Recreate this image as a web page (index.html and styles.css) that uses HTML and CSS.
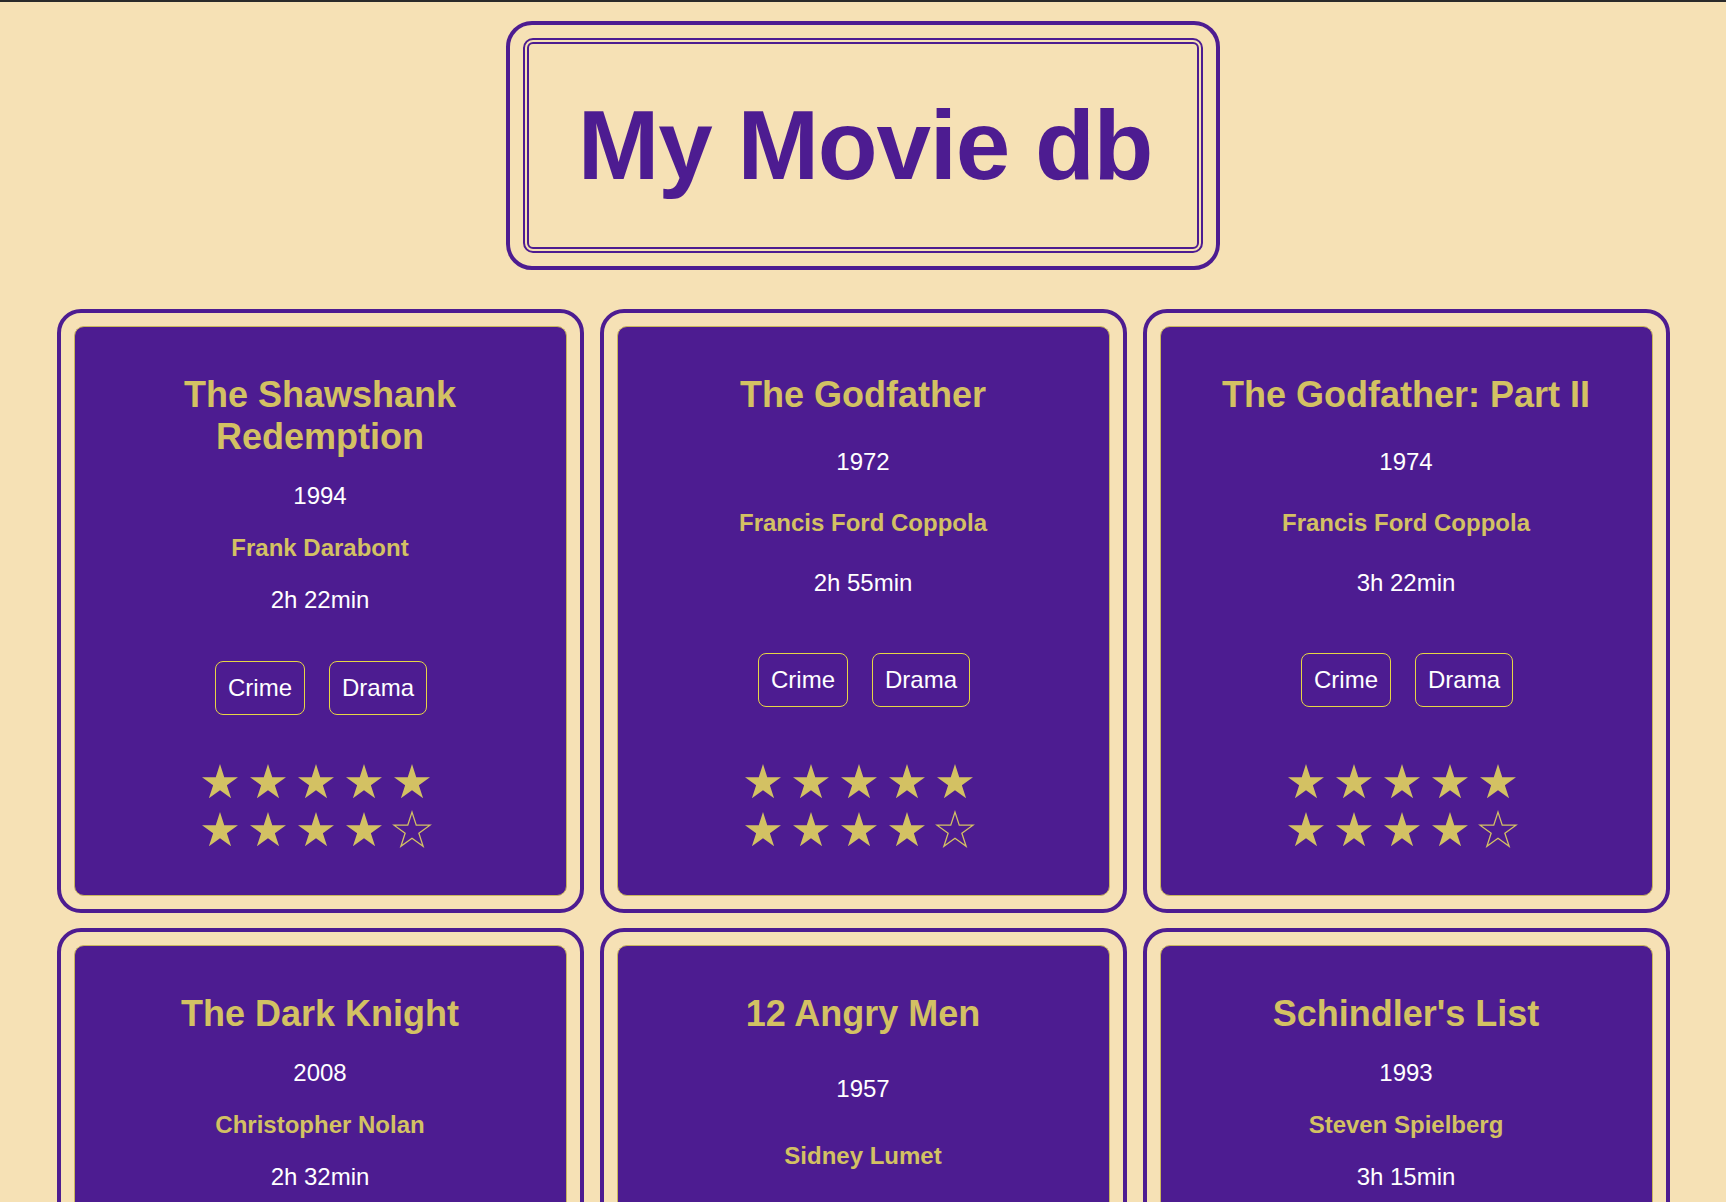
FILE: index.html
```html
<!DOCTYPE html>
<html lang="en">
<head>
<meta charset="utf-8">
<title>My Movie db</title>
<link rel="stylesheet" href="styles.css">
</head>
<body>
<svg class="svg-defs" width="0" height="0" aria-hidden="true">
  <defs>
    <path id="star" d="M18 0 L22.27 13.13 L36.07 13.13 L24.9 21.24 L29.17 34.37 L18 26.26 L6.83 34.37 L11.1 21.24 L-0.07 13.13 L13.73 13.13 Z"/>
  </defs>
</svg>

<header class="masthead">
  <div class="masthead-inner">
    <h1 class="site-title">My Movie db</h1>
  </div>
</header>

<main class="movie-grid">
  <article class="movie-card">
    <div class="movie-body">
      <h2 class="movie-title">The Shawshank Redemption</h2>
      <p class="movie-year">1994</p>
      <p class="movie-director">Frank Darabont</p>
      <p class="movie-runtime">2h 22min</p>
      <ul class="genre-list"><li class="genre">Crime</li><li class="genre">Drama</li></ul>
      <div class="rating">
        <svg class="star full" viewBox="-0.1 0 36.2 35"><use href="#star"/></svg>
        <svg class="star full" viewBox="-0.1 0 36.2 35"><use href="#star"/></svg>
        <svg class="star full" viewBox="-0.1 0 36.2 35"><use href="#star"/></svg>
        <svg class="star full" viewBox="-0.1 0 36.2 35"><use href="#star"/></svg>
        <svg class="star full" viewBox="-0.1 0 36.2 35"><use href="#star"/></svg>
        <svg class="star full" viewBox="-0.1 0 36.2 35"><use href="#star"/></svg>
        <svg class="star full" viewBox="-0.1 0 36.2 35"><use href="#star"/></svg>
        <svg class="star full" viewBox="-0.1 0 36.2 35"><use href="#star"/></svg>
        <svg class="star full" viewBox="-0.1 0 36.2 35"><use href="#star"/></svg>
        <svg class="star empty" viewBox="-0.1 0 36.2 35"><use href="#star"/></svg>
      </div>
    </div>
  </article>

  <article class="movie-card">
    <div class="movie-body">
      <h2 class="movie-title">The Godfather</h2>
      <p class="movie-year">1972</p>
      <p class="movie-director">Francis Ford Coppola</p>
      <p class="movie-runtime">2h 55min</p>
      <ul class="genre-list"><li class="genre">Crime</li><li class="genre">Drama</li></ul>
      <div class="rating">
        <svg class="star full" viewBox="-0.1 0 36.2 35"><use href="#star"/></svg>
        <svg class="star full" viewBox="-0.1 0 36.2 35"><use href="#star"/></svg>
        <svg class="star full" viewBox="-0.1 0 36.2 35"><use href="#star"/></svg>
        <svg class="star full" viewBox="-0.1 0 36.2 35"><use href="#star"/></svg>
        <svg class="star full" viewBox="-0.1 0 36.2 35"><use href="#star"/></svg>
        <svg class="star full" viewBox="-0.1 0 36.2 35"><use href="#star"/></svg>
        <svg class="star full" viewBox="-0.1 0 36.2 35"><use href="#star"/></svg>
        <svg class="star full" viewBox="-0.1 0 36.2 35"><use href="#star"/></svg>
        <svg class="star full" viewBox="-0.1 0 36.2 35"><use href="#star"/></svg>
        <svg class="star empty" viewBox="-0.1 0 36.2 35"><use href="#star"/></svg>
      </div>
    </div>
  </article>

  <article class="movie-card">
    <div class="movie-body">
      <h2 class="movie-title">The Godfather: Part II</h2>
      <p class="movie-year">1974</p>
      <p class="movie-director">Francis Ford Coppola</p>
      <p class="movie-runtime">3h 22min</p>
      <ul class="genre-list"><li class="genre">Crime</li><li class="genre">Drama</li></ul>
      <div class="rating">
        <svg class="star full" viewBox="-0.1 0 36.2 35"><use href="#star"/></svg>
        <svg class="star full" viewBox="-0.1 0 36.2 35"><use href="#star"/></svg>
        <svg class="star full" viewBox="-0.1 0 36.2 35"><use href="#star"/></svg>
        <svg class="star full" viewBox="-0.1 0 36.2 35"><use href="#star"/></svg>
        <svg class="star full" viewBox="-0.1 0 36.2 35"><use href="#star"/></svg>
        <svg class="star full" viewBox="-0.1 0 36.2 35"><use href="#star"/></svg>
        <svg class="star full" viewBox="-0.1 0 36.2 35"><use href="#star"/></svg>
        <svg class="star full" viewBox="-0.1 0 36.2 35"><use href="#star"/></svg>
        <svg class="star full" viewBox="-0.1 0 36.2 35"><use href="#star"/></svg>
        <svg class="star empty" viewBox="-0.1 0 36.2 35"><use href="#star"/></svg>
      </div>
    </div>
  </article>

  <article class="movie-card">
    <div class="movie-body">
      <h2 class="movie-title">The Dark Knight</h2>
      <p class="movie-year">2008</p>
      <p class="movie-director">Christopher Nolan</p>
      <p class="movie-runtime">2h 32min</p>
      <ul class="genre-list"><li class="genre">Action</li><li class="genre">Crime</li><li class="genre">Drama</li></ul>
      <div class="rating">
        <svg class="star full" viewBox="-0.1 0 36.2 35"><use href="#star"/></svg>
        <svg class="star full" viewBox="-0.1 0 36.2 35"><use href="#star"/></svg>
        <svg class="star full" viewBox="-0.1 0 36.2 35"><use href="#star"/></svg>
        <svg class="star full" viewBox="-0.1 0 36.2 35"><use href="#star"/></svg>
        <svg class="star full" viewBox="-0.1 0 36.2 35"><use href="#star"/></svg>
        <svg class="star full" viewBox="-0.1 0 36.2 35"><use href="#star"/></svg>
        <svg class="star full" viewBox="-0.1 0 36.2 35"><use href="#star"/></svg>
        <svg class="star full" viewBox="-0.1 0 36.2 35"><use href="#star"/></svg>
        <svg class="star full" viewBox="-0.1 0 36.2 35"><use href="#star"/></svg>
        <svg class="star empty" viewBox="-0.1 0 36.2 35"><use href="#star"/></svg>
      </div>
    </div>
  </article>

  <article class="movie-card">
    <div class="movie-body">
      <h2 class="movie-title">12 Angry Men</h2>
      <p class="movie-year">1957</p>
      <p class="movie-director">Sidney Lumet</p>
      <p class="movie-runtime">1h 36min</p>
      <ul class="genre-list"><li class="genre">Crime</li><li class="genre">Drama</li></ul>
      <div class="rating">
        <svg class="star full" viewBox="-0.1 0 36.2 35"><use href="#star"/></svg>
        <svg class="star full" viewBox="-0.1 0 36.2 35"><use href="#star"/></svg>
        <svg class="star full" viewBox="-0.1 0 36.2 35"><use href="#star"/></svg>
        <svg class="star full" viewBox="-0.1 0 36.2 35"><use href="#star"/></svg>
        <svg class="star full" viewBox="-0.1 0 36.2 35"><use href="#star"/></svg>
        <svg class="star full" viewBox="-0.1 0 36.2 35"><use href="#star"/></svg>
        <svg class="star full" viewBox="-0.1 0 36.2 35"><use href="#star"/></svg>
        <svg class="star full" viewBox="-0.1 0 36.2 35"><use href="#star"/></svg>
        <svg class="star full" viewBox="-0.1 0 36.2 35"><use href="#star"/></svg>
        <svg class="star empty" viewBox="-0.1 0 36.2 35"><use href="#star"/></svg>
      </div>
    </div>
  </article>

  <article class="movie-card">
    <div class="movie-body">
      <h2 class="movie-title">Schindler's List</h2>
      <p class="movie-year">1993</p>
      <p class="movie-director">Steven Spielberg</p>
      <p class="movie-runtime">3h 15min</p>
      <ul class="genre-list"><li class="genre">Biography</li><li class="genre">Drama</li><li class="genre">History</li></ul>
      <div class="rating">
        <svg class="star full" viewBox="-0.1 0 36.2 35"><use href="#star"/></svg>
        <svg class="star full" viewBox="-0.1 0 36.2 35"><use href="#star"/></svg>
        <svg class="star full" viewBox="-0.1 0 36.2 35"><use href="#star"/></svg>
        <svg class="star full" viewBox="-0.1 0 36.2 35"><use href="#star"/></svg>
        <svg class="star full" viewBox="-0.1 0 36.2 35"><use href="#star"/></svg>
        <svg class="star full" viewBox="-0.1 0 36.2 35"><use href="#star"/></svg>
        <svg class="star full" viewBox="-0.1 0 36.2 35"><use href="#star"/></svg>
        <svg class="star full" viewBox="-0.1 0 36.2 35"><use href="#star"/></svg>
        <svg class="star full" viewBox="-0.1 0 36.2 35"><use href="#star"/></svg>
        <svg class="star empty" viewBox="-0.1 0 36.2 35"><use href="#star"/></svg>
      </div>
    </div>
  </article>
</main>
</body>
</html>
```

FILE: styles.css
```css
* {
  box-sizing: border-box;
}

html {
  background: #f6e1b5;
}

body {
  margin: 0;
  border-top: 2px solid #2a2a2a;
  background: #f6e1b5;
  font-family: "Liberation Sans", Arial, Helvetica, sans-serif;
  color: #4d1c91;
}

.svg-defs {
  position: absolute;
  width: 0;
  height: 0;
  overflow: hidden;
}

/* ---------- header ---------- */
.masthead {
  width: 714px;
  margin: 19px auto 39px;
  border: 4px solid #4d1c91;
  border-radius: 26px;
  padding: 13px;
}

.masthead-inner {
  border: 6px double #4d1c91;
  border-radius: 10px;
}

.site-title {
  margin: 0;
  padding: 45px 0 45px 4px;
  text-align: center;
  font-size: 98px;
  font-weight: 700;
  letter-spacing: -1.25px;
  line-height: normal;
  color: #4d1c91;
}

/* ---------- grid ---------- */
.movie-grid {
  display: grid;
  grid-template-columns: repeat(3, 527px);
  justify-content: center;
  column-gap: 16px;
  row-gap: 15px;
  padding-bottom: 40px;
}

.movie-card {
  display: flex;
  flex-direction: column;
  border: 4px solid #4d1c91;
  border-radius: 24px;
  padding: 13px;
  background: #f6e1b5;
}

.movie-body {
  flex: 1;
  display: flex;
  flex-direction: column;
  align-items: center;
  justify-content: space-between;
  text-align: center;
  background: #4d1c91;
  border: 1px solid #c9b55e;
  border-radius: 10px;
  padding: 47px 40px 41px;
}

.movie-title {
  margin: 0;
  font-size: 36px;
  font-weight: 700;
  line-height: normal;
  color: #d3c163;
}

.movie-year,
.movie-director,
.movie-runtime {
  margin: 24px 0 0;
  font-size: 24px;
  line-height: normal;
}

.movie-year,
.movie-runtime {
  color: #ffffff;
}

.movie-director {
  font-weight: 700;
  color: #d3c163;
}

.genre-list {
  display: flex;
  flex-wrap: wrap;
  justify-content: center;
  gap: 24px;
  max-width: 300px;
  list-style: none;
  margin: 47px 0 0 2px;
  padding: 0;
}

.genre {
  border: 1px solid #e6d645;
  border-radius: 8px;
  padding: 12px;
  font-size: 24px;
  line-height: normal;
  color: #ffffff;
}

.rating {
  display: grid;
  grid-template-columns: repeat(5, 48px);
  grid-auto-rows: 48px;
  width: 240px;
  margin: 43px 0 0 3px;
}

.star {
  display: block;
  width: 36px;
  height: 35px;
  margin-top: 6px;
  overflow: visible;
}

.star.full {
  fill: #d3c163;
}

.star.empty {
  fill: none;
  stroke: #d3c163;
  stroke-width: 1.3;
  stroke-linejoin: miter;
}
```
